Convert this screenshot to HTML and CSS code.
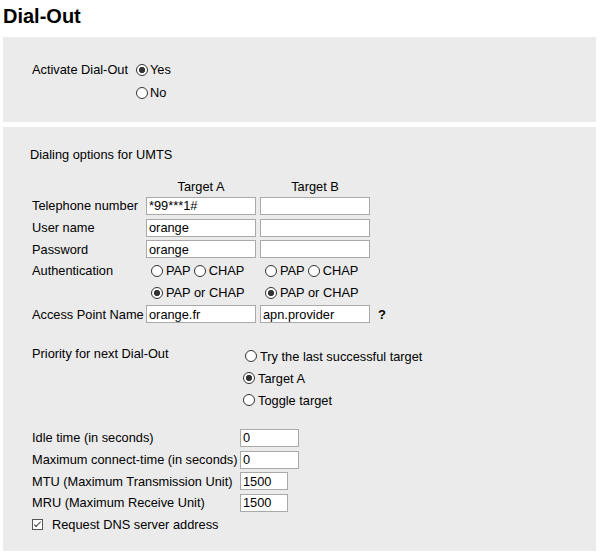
FILE: index.html
```html
<!DOCTYPE html>
<html>
<head>
    <title>Dial-Out</title>
    <link rel="stylesheet" href="styles.css">
</head>
<body>
    <h2 class="page-title">Dial-Out</h2>

    <div class="panel panel-activate">
        <div class="activate-grid">
            <div class="field-label">Activate Dial-Out</div>
            <div class="choice-stack">
                <label class="choice"><input type="radio" name="activate" checked>Yes</label>
                <label class="choice"><input type="radio" name="activate">No</label>
            </div>
        </div>
    </div>

    <div class="panel panel-options">
        <div class="section-title">Dialing options for UMTS</div>

        <div class="target-grid">
            <div></div>
            <div class="col-head">Target A</div>
            <div class="col-head">Target B</div>
            <div></div>

            <div class="field-label">Telephone number</div>
            <div class="cell"><input class="text-input" type="text" value="*99***1#"></div>
            <div class="cell"><input class="text-input" type="text" value=""></div>
            <div></div>

            <div class="field-label">User name</div>
            <div class="cell"><input class="text-input" type="text" value="orange"></div>
            <div class="cell"><input class="text-input" type="text" value=""></div>
            <div></div>

            <div class="field-label">Password</div>
            <div class="cell"><input class="text-input" type="text" value="orange"></div>
            <div class="cell"><input class="text-input" type="text" value=""></div>
            <div></div>

            <div class="field-label">Authentication</div>
            <div class="cell">
                <label class="choice"><input type="radio" name="authA">PAP</label>
                <label class="choice"><input type="radio" name="authA">CHAP</label>
            </div>
            <div class="cell">
                <label class="choice"><input type="radio" name="authB">PAP</label>
                <label class="choice"><input type="radio" name="authB">CHAP</label>
            </div>
            <div></div>

            <div></div>
            <div class="cell">
                <label class="choice"><input type="radio" name="authA" checked>PAP or CHAP</label>
            </div>
            <div class="cell">
                <label class="choice"><input type="radio" name="authB" checked>PAP or CHAP</label>
            </div>
            <div></div>

            <div class="field-label">Access Point Name</div>
            <div class="cell"><input class="text-input" type="text" value="orange.fr"></div>
            <div class="cell"><input class="text-input" type="text" value="apn.provider"></div>
            <div class="cell help-mark" title="Help">?</div>
        </div>

        <div class="priority-grid">
            <div class="field-label priority-label">Priority for next Dial-Out</div>
            <div class="choice-stack">
                <label class="choice"><input type="radio" name="priority">Try the last successful target</label>
                <label class="choice"><input type="radio" name="priority" checked>Target A</label>
                <label class="choice"><input type="radio" name="priority">Toggle target</label>
            </div>
        </div>

        <div class="settings-grid">
            <div class="field-label">Idle time (in seconds)</div>
            <div class="cell"><input class="text-input input-wide" type="text" value="0"></div>

            <div class="field-label">Maximum connect-time (in seconds)</div>
            <div class="cell"><input class="text-input input-wide" type="text" value="0"></div>

            <div class="field-label">MTU (Maximum Transmission Unit)</div>
            <div class="cell"><input class="text-input input-short" type="text" value="1500"></div>

            <div class="field-label">MRU (Maximum Receive Unit)</div>
            <div class="cell"><input class="text-input input-short" type="text" value="1500"></div>

            <label class="field-label check-row"><input type="checkbox" checked>Request DNS server address</label>
        </div>
    </div>
</body>
</html>
```

FILE: styles.css
```css
body {
    margin: 0;
    padding: 0 4px 0 3px;
    font-family: "Liberation Sans", Arial, sans-serif;
    font-size: 12.8px;
    color: #000;
    background: #fff;
}

.page-title {
    font-size: 20px;
    font-weight: bold;
    line-height: 23px;
    margin: 5px 0 9px;
}

.panel {
    background-color: #ebebeb;
    padding-left: 27px;
}

.panel + .panel {
    margin-top: 5px;
}

.panel-activate {
    padding-top: 21px;
    padding-bottom: 18px;
}

.panel-options {
    padding-top: 18.5px;
    padding-bottom: 16px;
}

.field-label {
    display: flex;
    align-items: center;
    padding-left: 2px;
    white-space: nowrap;
}

.cell {
    display: flex;
    align-items: center;
}

/* radio choices */
.choice-stack {
    display: flex;
    flex-direction: column;
}

.choice {
    display: inline-flex;
    align-items: center;
    height: 22px;
    white-space: nowrap;
}

.choice input[type="radio"] {
    appearance: none;
    -webkit-appearance: none;
    box-sizing: border-box;
    width: 12px;
    height: 12px;
    margin: 0 3px 0 5px;
    border: 1px solid #333;
    border-radius: 50%;
    background: #fff;
}

.choice + .choice input[type="radio"] {
    margin-left: 3px;
}

.choice input[type="radio"]:checked {
    background: radial-gradient(circle, #333 0 2.8px, #fff 3.4px);
}

/* activate panel */
.activate-grid {
    display: grid;
    grid-template-columns: 101px auto;
}

.panel-activate .choice {
    height: 23px;
}

.panel-activate .choice input[type="radio"] {
    margin: 0 2px 0 5px;
}

.panel-activate .field-label {
    align-items: flex-start;
    line-height: 23px;
}

/* dialing options */
.section-title {
    line-height: 18px;
    margin-bottom: 12.5px;
}

.target-grid {
    display: grid;
    grid-template-columns: 112px 110px 110px auto;
    grid-template-rows: 19px;
    grid-auto-rows: 21.7px;
    column-gap: 4px;
}

.col-head {
    display: flex;
    align-items: flex-end;
    justify-content: center;
    line-height: 16px;
}

.text-input {
    box-sizing: border-box;
    width: 110px;
    height: 18px;
    margin: 0;
    padding: 0 2px;
    border: 1px solid #a9a9a9;
    background: #fff;
    font: inherit;
    color: #000;
    outline: none;
}

.input-wide {
    width: 59px;
}

.input-short {
    width: 48px;
}

.help-mark {
    padding-left: 4px;
    font-size: 13px;
    font-weight: bold;
    cursor: help;
}

.priority-grid {
    display: grid;
    grid-template-columns: 210px auto;
    margin-top: 20px;
}

.priority-label {
    align-items: flex-start;
    line-height: 17px;
}

.settings-grid {
    display: grid;
    grid-template-columns: 210px auto;
    grid-auto-rows: 21.6px;
    margin-top: 16px;
}

.check-row {
    grid-column: 1 / -1;
}

.check-row input[type="checkbox"] {
    appearance: none;
    -webkit-appearance: none;
    position: relative;
    box-sizing: border-box;
    width: 11px;
    height: 11px;
    margin: 0 9px 0 0;
    border: 1px solid #555;
    background: #fff;
}

.check-row input[type="checkbox"]:checked::after {
    content: "";
    position: absolute;
    left: 3px;
    top: 0px;
    width: 2px;
    height: 6px;
    border-right: 1px solid #333;
    border-bottom: 1px solid #333;
    transform: rotate(45deg);
}
```
